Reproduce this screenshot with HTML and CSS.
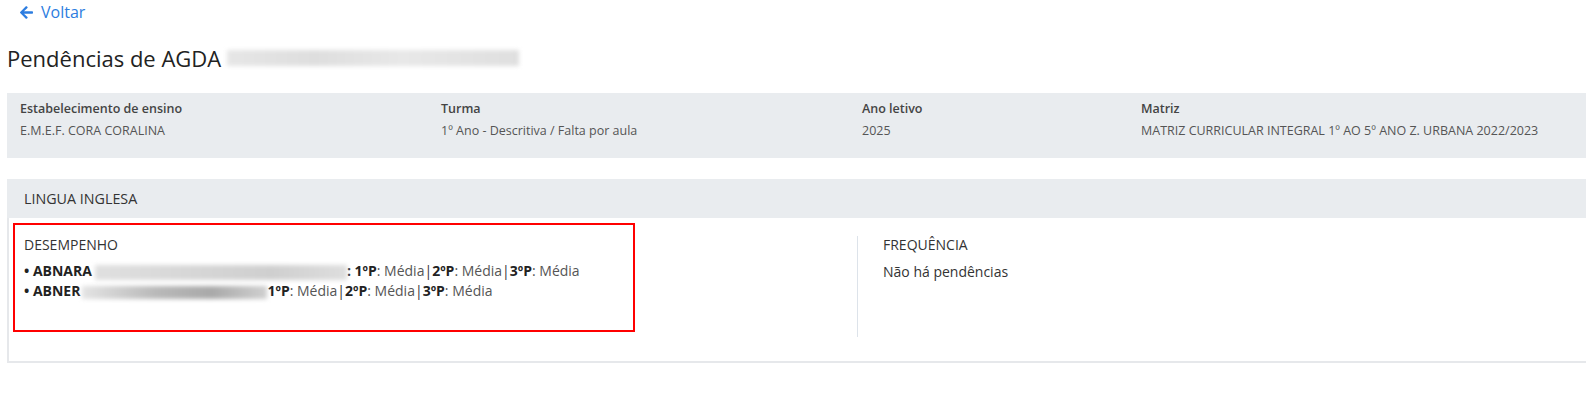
FILE: index.html
```html
<!DOCTYPE html>
<html lang="pt-BR">
<head>
<meta charset="utf-8">
<title>Pendências</title>
<link rel="stylesheet" href="styles.css">
</head>
<body>
<div class="page">
  <a class="back" href="#">
    <svg class="back-icon" viewBox="0 0 448 512" width="13" height="15" aria-hidden="true"><path fill="currentColor" d="M257.5 445.1l-22.2 22.2c-9.4 9.4-24.6 9.4-33.9 0L7 273c-9.4-9.4-9.4-24.6 0-33.9L201.4 44.7c9.4-9.4 24.6-9.4 33.9 0l22.2 22.2c9.5 9.5 9.3 25-.4 34.3L136.6 216H424c13.3 0 24 10.7 24 24v32c0 13.3-10.7 24-24 24H136.6l120.5 114.8c9.8 9.3 10 24.8.4 34.3z"/></svg>
    <span>Voltar</span>
  </a>

  <h1 class="title">Pendências de AGDA <span class="blur blur-title"></span></h1>

  <div class="info">
    <div class="info-col">
      <div class="info-label">Estabelecimento de ensino</div>
      <div class="info-value">E.M.E.F. CORA CORALINA</div>
    </div>
    <div class="info-col">
      <div class="info-label">Turma</div>
      <div class="info-value">1º Ano - Descritiva / Falta por aula</div>
    </div>
    <div class="info-col">
      <div class="info-label">Ano letivo</div>
      <div class="info-value">2025</div>
    </div>
    <div class="info-col">
      <div class="info-label">Matriz</div>
      <div class="info-value">MATRIZ CURRICULAR INTEGRAL 1º AO 5º ANO Z. URBANA 2022/2023</div>
    </div>
  </div>

  <div class="card">
    <div class="card-header">LINGUA INGLESA</div>
    <div class="card-body">
      <div class="left-col">
        <div class="highlight">
          <div class="section-title">DESEMPENHO</div>
          <div class="row"><b>• ABNARA</b><span class="blur blur-a"></span><b>: 1ºP</b>: Média<span class="sep">|</span><b>2ºP</b>: Média<span class="sep">|</span><b>3ºP</b>: Média</div>
          <div class="row"><b>• ABNER</b><span class="blur blur-b"></span><b>1ºP</b>: Média<span class="sep">|</span><b>2ºP</b>: Média<span class="sep">|</span><b>3ºP</b>: Média</div>
        </div>
      </div>
      <div class="right-col">
        <div class="section-title">FREQUÊNCIA</div>
        <div class="row plain">Não há pendências</div>
      </div>
    </div>
  </div>
</div>
</body>
</html>
```

FILE: styles.css
```css
html, body {
  margin: 0;
  padding: 0;
  background: #ffffff;
  overflow: hidden;
}

body {
  font-family: "Open Sans", "Noto Sans", sans-serif;
  color: #333;
}

.page {
  padding-left: 7px;
}

.back {
  display: flex;
  align-items: center;
  gap: 8px;
  height: 24px;
  padding-left: 13px;
  color: #2d7de0;
  text-decoration: none;
  font-size: 16px;
}

.back-icon {
  display: block;
}

.title {
  margin: 20px 0 0;
  font-size: 22px;
  line-height: 28px;
  font-weight: 400;
  color: #222;
  display: flex;
  align-items: center;
  gap: 6px;
}

.blur {
  display: inline-block;
  filter: blur(2px);
  vertical-align: middle;
}

.blur-title {
  width: 292px;
  height: 16px;
  background: linear-gradient(90deg, #e6e6e6, #dedede 30%, #e8e8e8 60%, #dfdfdf);
}

.info {
  margin-top: 21px;
  height: 65px;
  box-sizing: border-box;
  background: #e9ecef;
  padding: 7px 0 0 13px;
  display: grid;
  grid-template-columns: 421px 421px 279px 1fr;
}

.info-label {
  font-size: 12.5px;
  line-height: 17px;
  font-weight: 600;
  color: #444;
}

.info-value {
  margin-top: 5px;
  font-size: 12.5px;
  line-height: 17px;
  color: #555;
}

.card {
  margin-top: 21px;
}

.card-header {
  height: 39px;
  box-sizing: border-box;
  background: #e9ecef;
  padding-left: 17px;
  display: flex;
  align-items: center;
  font-size: 14.3px;
  color: #333;
}

.card-body {
  border-left: 2px solid #e6e8eb;
  border-bottom: 2px solid #e6e8eb;
  height: 145px;
  box-sizing: border-box;
  display: grid;
  grid-template-columns: 848px 1fr;
}

.left-col {
  padding: 5px 0 0 4px;
}

.highlight {
  width: 622px;
  height: 109px;
  box-sizing: border-box;
  border: 2px solid #ff0000;
  padding: 10px 0 0 9px;
}

.section-title {
  font-size: 14px;
  line-height: 20px;
  color: #333;
}

.highlight .section-title {
  margin-bottom: 6px;
}

.row {
  font-size: 14px;
  line-height: 20px;
  color: #555;
  white-space: nowrap;
}

.row b {
  color: #222;
  font-weight: 700;
}

.sep {
  color: #333;
}

.blur-a {
  width: 252px;
  height: 15px;
  margin-left: 3px;
  background: linear-gradient(90deg, #e0e0e0, #d6d6d6 40%, #cfcfcf 70%, #dedede);
}

.blur-b {
  width: 185px;
  height: 13px;
  margin-left: 2px;
  background: linear-gradient(90deg, #e4e4e4, #b9b9b9 40%, #a9a9a9 70%, #d0d0d0);
}

.right-col {
  margin-top: 18px;
  height: 101px;
  border-left: 1px solid #dde3ea;
  padding-left: 25px;
}

.right-col .section-title {
  line-height: 18px;
  margin-bottom: 8px;
}

.plain {
  color: #333;
}
```
